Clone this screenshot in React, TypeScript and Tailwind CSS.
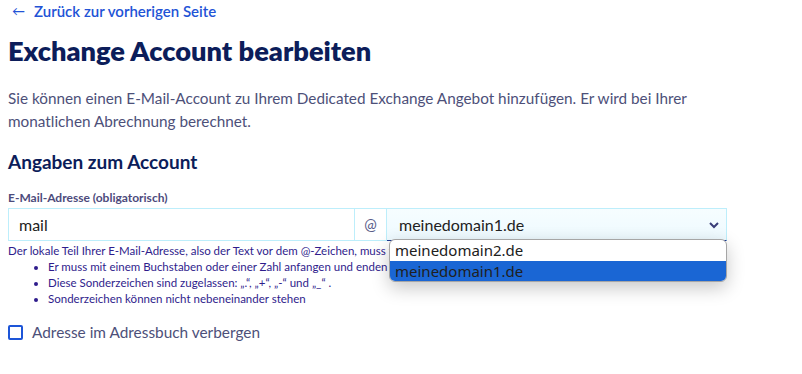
import React from "react";

const rules = [
  "Er muss mit einem Buchstaben oder einer Zahl anfangen und enden",
  "Diese Sonderzeichen sind zugelassen: „.“, „+“, „-“ und „_“ .",
  "Sonderzeichen können nicht nebeneinander stehen",
];

export default function App() {
  return (
    <div className="w-[802px] h-[374px] bg-white font-['Lato',sans-serif] px-2 overflow-hidden">
      <a className="flex items-center gap-[9px] pl-[4px] pt-[1px] h-[22px] text-[15px] font-semibold text-[#2253d6]">
        <span className="text-[13px] font-normal">←</span>
        <span>Zurück zur vorherigen Seite</span>
      </a>
      <h1 className="mt-[12px] text-[27.2px] leading-[34px] font-extrabold text-[#0c1d5a]">
        Exchange Account bearbeiten
      </h1>
      <p className="mt-[19px] text-[15.3px] leading-[23px] text-[#4d5079] w-[720px]">
        Sie können einen E-Mail-Account zu Ihrem Dedicated Exchange Angebot hinzufügen. Er wird bei Ihrer monatlichen Abrechnung berechnet.
      </p>
      <h2 className="mt-[16px] text-[19px] leading-[26px] font-bold text-[#0c1d5a]">
        Angaben zum Account
      </h2>
      <label className="block mt-[15px] text-[12px] leading-[16px] font-bold text-[#4d4b7c]">
        E-Mail-Adresse (obligatorisch)
      </label>
      <div className="relative mt-[2px] flex w-[719px] h-[33px]">
        <div className="flex-1 flex items-center border border-[#bdeefb] bg-white pl-[10px] text-[16px] text-[#222]">
          mail
        </div>
        <div className="w-[32px] flex items-center justify-center border-y border-r border-[#bdeefb] bg-white text-[15px] text-[#5a5d8a]">
          @
        </div>
        <div className="w-[340px] flex items-center justify-between border-y border-r border-[#bdeefb] border-b-[#1f3a93] bg-gradient-to-b from-[#f6fdff] to-[#eefaff] pl-[12px] pr-[6px] text-[16px] text-[#222]">
          <span>meinedomain1.de</span>
          <svg width="12" height="8" viewBox="0 0 12 8">
            <path d="M2 2l4 4 4-4" fill="none" stroke="#3a3d78" strokeWidth="2" />
          </svg>
        </div>
        <div className="absolute left-[381px] top-[31px] w-[338px] overflow-hidden rounded-[6px] border border-[#a6a6a6] bg-white font-['Noto_Sans',sans-serif] text-[15px] leading-[21px] text-[#202020] shadow-[0_6px_18px_rgba(0,0,0,0.22)] z-10">
          <div className="px-[5px] h-[21px]">meinedomain2.de</div>
          <div className="px-[5px] h-[20px] bg-[#1a66d4]">meinedomain1.de</div>
        </div>
      </div>
      <div className="mt-[2px] text-[11.5px] leading-[16px] text-[#2f1c8c]">
        <p>Der lokale Teil Ihrer E-Mail-Adresse, also der Text vor dem @-Zeichen, muss folgende Regeln erfüllen:</p>
        <ul className="list-disc pl-[40px]">
          {rules.map((r) => (
            <li key={r}>{r}</li>
          ))}
        </ul>
      </div>
      <label className="mt-[14px] flex items-center gap-[9px] text-[15.4px] text-[#4d5079]">
        <span className="w-[15px] h-[15px] border-2 border-[#1d55d8] rounded-[2px]" />
        Adresse im Adressbuch verbergen
      </label>
    </div>
  );
}
